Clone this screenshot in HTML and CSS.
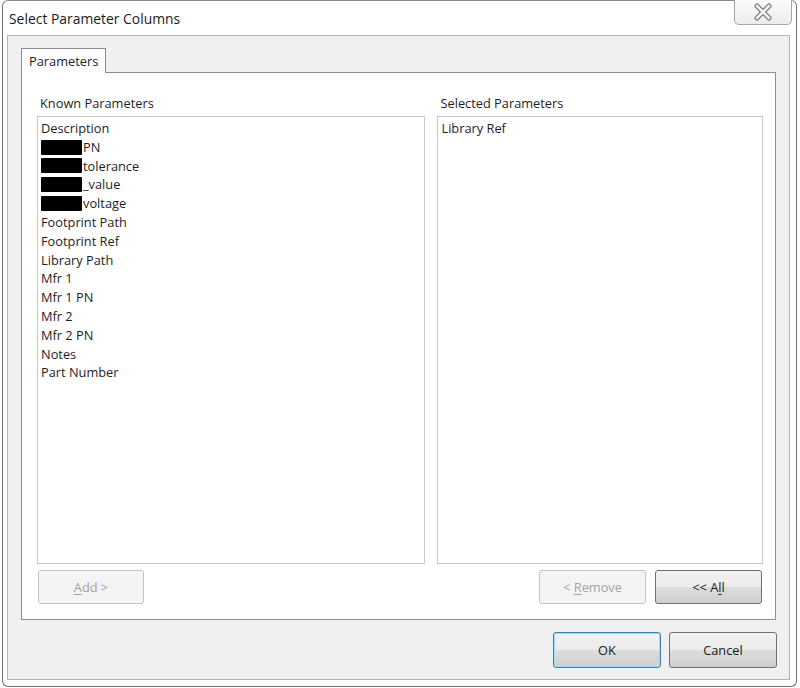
FILE: index.html
```html
<!DOCTYPE html>
<html>
<head>
<meta charset="utf-8">
<link rel="stylesheet" href="styles.css">
</head>
<body>
<div class="window">
  <div class="titlebar">
    <div class="title">Select Parameter Columns</div>
    <div class="close">
      <svg width="24" height="18" viewBox="0 0 24 18">
        <path d="M6 3 L18 15 M18 3 L6 15" stroke="#7a7a7a" stroke-width="5" stroke-linecap="round" fill="none"/>
        <path d="M6 3 L18 15 M18 3 L6 15" stroke="#f2f2f2" stroke-width="2.6" stroke-linecap="round" fill="none"/>
      </svg>
    </div>
  </div>
  <div class="client">
    <div class="tabs">
      <div class="tab">Parameters</div>
    </div>
    <div class="panel">
      <div class="cols">
        <div class="col left">
          <div class="label">Known Parameters</div>
          <div class="list">
            <div class="item">Description</div>
            <div class="item"><span class="redact"></span>PN</div>
            <div class="item"><span class="redact"></span>tolerance</div>
            <div class="item"><span class="redact"></span>_value</div>
            <div class="item"><span class="redact"></span>voltage</div>
            <div class="item">Footprint Path</div>
            <div class="item">Footprint Ref</div>
            <div class="item">Library Path</div>
            <div class="item">Mfr 1</div>
            <div class="item">Mfr 1 PN</div>
            <div class="item">Mfr 2</div>
            <div class="item">Mfr 2 PN</div>
            <div class="item">Notes</div>
            <div class="item">Part Number</div>
          </div>
          <div class="btnrow">
            <div class="btn disabled w106"><span><u>A</u>dd &gt;</span></div>
          </div>
        </div>
        <div class="col right">
          <div class="label">Selected Parameters</div>
          <div class="list">
            <div class="item">Library Ref</div>
          </div>
          <div class="btnrow end">
            <div class="btn disabled"><span>&lt; <u>R</u>emove</span></div>
            <div class="btn"><span>&lt;&lt; A<u>l</u>l</span></div>
          </div>
        </div>
      </div>
    </div>
    <div class="footer">
      <div class="btn big default">OK</div>
      <div class="btn big">Cancel</div>
    </div>
  </div>
</div>
</body>
</html>
```

FILE: styles.css
```css
* { box-sizing: border-box; }
html, body { margin: 0; padding: 0; }
body {
  width: 800px;
  height: 688px;
  background: #ffffff;
  font-family: "Open Sans", "Noto Sans", sans-serif;
  font-size: 12.8px;
  color: #1e1e1e;
  overflow: hidden;
}
.window {
  margin-left: 2px;
  width: 795px;
  height: 687px;
  border: 1px solid #6f6f6f;
  border-top-color: #8a8a8a;
  border-radius: 6px;
  background: #ffffff;
  display: flex;
  flex-direction: column;
}
.titlebar {
  height: 34px;
  display: flex;
  justify-content: space-between;
  align-items: flex-start;
}
.title {
  padding: 8px 0 0 6px;
  font-size: 13.9px;
  color: #1a1a1a;
}
.close {
  margin-top: -1px;
  margin-right: 4px;
  width: 58px;
  height: 25px;
  border: 1px solid #a6a6a6;
  border-top: none;
  border-radius: 0 0 5px 5px;
  background: linear-gradient(#fbfbfb, #ececec);
  display: flex;
  align-items: center;
  justify-content: center;
}
.client {
  margin-left: 4px;
  width: 783px;
  height: 645px;
  border: 1px solid #b4b4b4;
  background: #f0f0f0;
  padding: 12px 0 0 13px;
}
.tabs {
  display: flex;
  height: 24px;
  position: relative;
  z-index: 1;
}
.tab {
  width: 85px;
  height: 25px;
  border: 1px solid #8d8d8d;
  border-bottom: none;
  background: #ffffff;
  padding: 3px 0 0 7px;
  color: #1e1e1e;
}
.panel {
  width: 755px;
  height: 548px;
  border: 1px solid #8d8d8d;
  background: #ffffff;
  padding: 16px 12px 0 15px;
}
.cols {
  display: flex;
  gap: 12px;
}
.col { display: flex; flex-direction: column; }
.col.left { width: 389px; }
.col.right { width: 326px; }
.label {
  height: 27px;
  padding: 6px 0 0 3px;
  line-height: 16px;
}
.list {
  height: 448px;
  border: 1px solid #c9c9c9;
  padding: 2px 0 0 3px;
}
.item {
  height: 18.8px;
  line-height: 18.8px;
  white-space: nowrap;
  display: flex;
  align-items: center;
}
.redact {
  display: inline-block;
  width: 41px;
  height: 15px;
  background: #000;
  border-radius: 1px;
  margin-right: 1px;
}
.btnrow {
  display: flex;
  gap: 9px;
  margin-top: 6px;
  padding-left: 1px;
}
.btnrow.end { justify-content: flex-end; padding-left: 0; padding-right: 1px; }
.btn {
  width: 107px;
  height: 34px;
  border: 1px solid #707070;
  border-radius: 3px;
  background: linear-gradient(#f2f2f2 0%, #ebebeb 50%, #dddddd 51%, #cfcfcf 100%);
  display: flex;
  align-items: center;
  justify-content: center;
  color: #1a1a1a;
  white-space: pre;
}
.btn.w106 { width: 106px; }
.btn.disabled {
  background: #f4f4f4;
  border-color: #c3c3c3;
  color: #a3a3a3;
}
.btn u { text-decoration-thickness: 1px; text-underline-offset: 2px; }
.footer {
  display: flex;
  gap: 8px;
  padding-left: 532px;
  margin-top: 12px;
}
.btn.big { height: 36px; width: 108px; }
.btn.default {
  border-color: #3c7fb1;
  box-shadow: inset 0 0 0 1px #9fdcf7;
}
```
